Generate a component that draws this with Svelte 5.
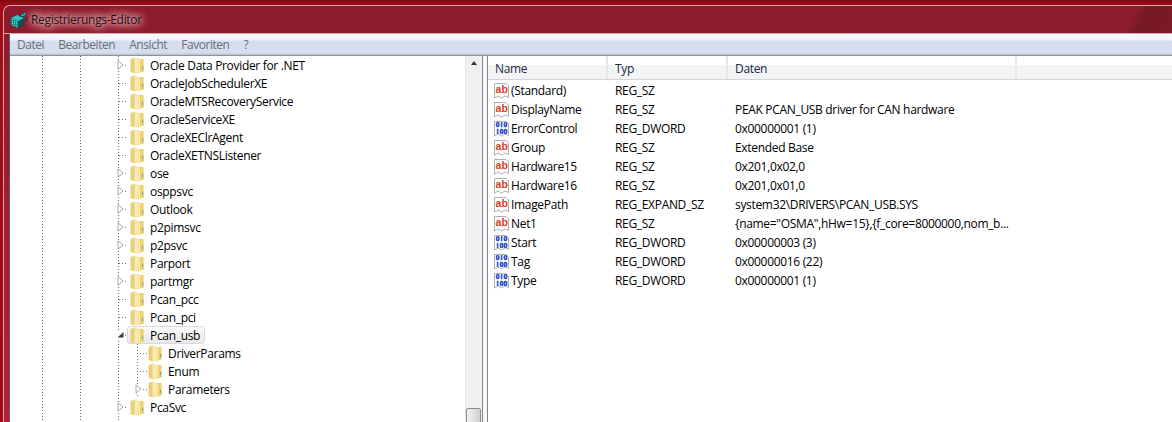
<script>
  const treeRows = [
    { label: 'Oracle Data Provider for .NET', arrow: 'open' },
    { label: 'OracleJobSchedulerXE' },
    { label: 'OracleMTSRecoveryService' },
    { label: 'OracleServiceXE' },
    { label: 'OracleXEClrAgent' },
    { label: 'OracleXETNSListener' },
    { label: 'ose', arrow: 'open' },
    { label: 'osppsvc', arrow: 'open' },
    { label: 'Outlook', arrow: 'open' },
    { label: 'p2pimsvc', arrow: 'open' },
    { label: 'p2psvc', arrow: 'open' },
    { label: 'Parport' },
    { label: 'partmgr', arrow: 'open' },
    { label: 'Pcan_pcc' },
    { label: 'Pcan_pci' },
    { label: 'Pcan_usb', arrow: 'down', selected: true },
    { label: 'DriverParams', child: true },
    { label: 'Enum', child: true },
    { label: 'Parameters', child: true, arrow: 'open' },
    { label: 'PcaSvc', arrow: 'open' }
  ];

  const values = [
    { name: '(Standard)', type: 'REG_SZ', data: '', icon: 'ab' },
    { name: 'DisplayName', type: 'REG_SZ', data: 'PEAK PCAN_USB driver for CAN hardware', icon: 'ab' },
    { name: 'ErrorControl', type: 'REG_DWORD', data: '0x00000001 (1)', icon: 'bin' },
    { name: 'Group', type: 'REG_SZ', data: 'Extended Base', icon: 'ab' },
    { name: 'Hardware15', type: 'REG_SZ', data: '0x201,0x02,0', icon: 'ab' },
    { name: 'Hardware16', type: 'REG_SZ', data: '0x201,0x01,0', icon: 'ab' },
    { name: 'ImagePath', type: 'REG_EXPAND_SZ', data: 'system32\\DRIVERS\\PCAN_USB.SYS', icon: 'ab' },
    { name: 'Net1', type: 'REG_SZ', data: '{name="OSMA",hHw=15},{f_core=8000000,nom_b...', icon: 'ab' },
    { name: 'Start', type: 'REG_DWORD', data: '0x00000003 (3)', icon: 'bin' },
    { name: 'Tag', type: 'REG_DWORD', data: '0x00000016 (22)', icon: 'bin' },
    { name: 'Type', type: 'REG_DWORD', data: '0x00000001 (1)', icon: 'bin' }
  ];

  const menu = ['Datei', 'Bearbeiten', 'Ansicht', 'Favoriten', '?'];
</script>

{#snippet folder()}
  <svg class="folder" width="15" height="17" viewBox="0 0 15 17">
    <path d="M0.5 2 L5 0.5 L5 16.5 L0.5 15 Z" fill="#e8cf7e" />
    <path d="M4.5 0.5 L8 1 L8 16 L4.5 16.5 Z" fill="#f8eab0" />
    <path d="M8 2 L13.5 2 L14 14.5 L8 16 Z" fill="#eed172" />
    <path d="M8.5 2.5 L9.7 2.5 L9.7 15 L8.5 15 Z" fill="#fff6cc" />
    <path d="M12 9 L13 9 L13 12 L12 12 Z" fill="#5f9fd6" />
  </svg>
{/snippet}

{#snippet arrow(kind)}
  <svg class="arrow" width="8" height="10" viewBox="0 0 8 10">
    {#if kind === 'down'}
      <path d="M0.5 7.5 L6.5 7.5 L6.5 2 Z" fill="#3c3c3c" />
    {:else}
      <path d="M1 0.8 L6 5 L1 9.2 Z" fill="#fff" stroke="#a6a6a6" />
    {/if}
  </svg>
{/snippet}

{#snippet valueIcon(kind)}
  <svg class="vicon" width="16" height="17" viewBox="0 0 16 17">
    <path d="M0.5 1.5 H12 L14.5 4 V15.5 L11 14 L7.5 16 L4 14 L0.5 16 Z" fill="#fff" stroke="#b0b0b0" />
    {#if kind === 'ab'}
      <text x="1.6" y="11" class="ab">ab</text>
    {:else}
      <g fill="none" stroke="#2f55c9" stroke-width="1.6">
        <rect x="2.6" y="2.8" width="2.2" height="3.6" rx="0.8" />
        <path d="M7.6 2 V7.2" />
        <rect x="10.4" y="2.8" width="2.2" height="3.6" rx="0.8" />
        <path d="M3.6 8.8 V14" />
        <rect x="6.5" y="9.6" width="2.2" height="3.6" rx="0.8" />
        <rect x="10.4" y="9.6" width="2.2" height="3.6" rx="0.8" />
      </g>
    {/if}
  </svg>
{/snippet}

<div class="window">
  <header class="titlebar">
    <svg class="appicon" width="19" height="18" viewBox="0 0 19 18">
      <defs>
        <pattern id="grid" width="2" height="2" patternUnits="userSpaceOnUse">
          <rect width="2" height="2" fill="#0e8f96" />
          <rect width="1" height="1" fill="#5fe0dc" />
        </pattern>
      </defs>
      <path d="M1 7 L8 10 L8 17 L1 14 Z" fill="url(#grid)" />
      <path d="M8 10 L14 7 L14 14 L8 17 Z" fill="#0b4f55" />
      <path d="M1 7 L7 4 L14 7 L8 10 Z" fill="#2bc4c2" />
      <path d="M10 5 L14 1 L17 3 L13 6 Z" fill="url(#grid)" stroke="#123" stroke-width="0.6" />
      <path d="M15 7 L18 5 L18 9 L15 11 Z" fill="#1c2a30" />
    </svg>
    <span class="title">Registrierungs-Editor</span>
  </header>

  <div class="frame">
    <div class="client">
      <nav class="menubar">
        {#each menu as item}
          <span>{item}</span>
        {/each}
      </nav>

      <div class="panes">
        <section class="tree">
          <div class="tree-rows">
            {#each treeRows as row}
              <div class="row" class:child={row.child}>
                <span class="twist">
                  {#if row.arrow}{@render arrow(row.arrow)}{/if}
                </span>
                <span class="item" class:selected={row.selected}>
                  {@render folder()}
                  <span>{row.label}</span>
                </span>
              </div>
            {/each}
          </div>
          <div class="scrollbar">
            <div class="up"></div>
            <div class="thumb"></div>
          </div>
        </section>

        <section class="list">
          <div class="head">
            <span class="c1">Name</span>
            <span class="c2">Typ</span>
            <span class="c3">Daten</span>
            <span class="rest"></span>
          </div>
          <div class="body">
            {#each values as v}
              <div class="vrow">
                <span class="c1 name">{@render valueIcon(v.icon)}{v.name}</span>
                <span class="c2">{v.type}</span>
                <span class="c3">{v.data}</span>
              </div>
            {/each}
          </div>
        </section>
      </div>
    </div>
  </div>
</div>

<style>
  :global(body) {
    margin: 0;
    overflow: hidden;
  }

  .window {
    width: 1172px;
    height: 422px;
    box-sizing: border-box;
    padding-top: 5px;
    padding-left: 3px;
    background: linear-gradient(#7d0a11 0, #a30c16 5px, #a00b15 100%);
    font-family: "Open Sans", "Liberation Sans", sans-serif;
    font-size: 12px;
    letter-spacing: -0.32px;
    overflow: hidden;
  }

  .titlebar {
    height: 29px;
    box-sizing: border-box;
    display: flex;
    align-items: center;
    gap: 2px;
    padding-left: 6px;
    border-top: 1px solid #d9a6ac;
    border-left: 1px solid #d9a6ac;
    border-bottom: 1px solid #d9a6ac;
    border-top-left-radius: 7px;
    background: linear-gradient(118deg, #8d1b2c 0%, #8c1c2d 96%, #761a25 96.8%, #7a1a26 100%);
  }

  .appicon {
    flex: none;
  }

  .title {
    color: #2a0f12;
    text-shadow: 0 0 6px #eec4c7, 0 0 8px #e8b9bc, 0 0 10px #e0a8ad, 0 0 14px #d89aa0;
  }

  .frame {
    height: 388px;
    box-sizing: border-box;
    border-left: 1px solid #d9a6ac;
    padding-left: 5px;
    background: linear-gradient(#8f1b2e, #b81e38);
    display: flex;
  }

  .client {
    flex: 1;
    min-width: 0;
    border-left: 1px solid #5f5a68;
    background: #fff;
    display: flex;
    flex-direction: column;
  }

  .menubar {
    height: 22px;
    flex: none;
    box-sizing: border-box;
    display: flex;
    align-items: center;
    gap: 14px;
    padding-left: 7px;
    letter-spacing: -0.45px;
    color: #6b6f78;
    border-bottom: 1px solid #8f939b;
    background: linear-gradient(#f6f8fc 0%, #f3f6fb 25%, #d5ddef 35%, #d6ddee 90%, #b9bdc9 100%);
  }

  .panes {
    flex: 1;
    display: flex;
    min-height: 0;
    color: #000;
    background: #f6f7f9;
  }

  .tree {
    width: 473px;
    flex: none;
    display: flex;
    border-right: 1px solid #7e8792;
    box-sizing: border-box;
    background: #fff;
  }

  .tree-rows {
    flex: 1;
    min-width: 0;
    /* dotted guide lines of the ancestor levels */
    background:
      repeating-linear-gradient(#666 0 1px, transparent 1px 3px) 32px 0 / 1px 100% no-repeat,
      repeating-linear-gradient(#666 0 1px, transparent 1px 3px) 70px 0 / 1px 100% no-repeat,
      repeating-linear-gradient(#666 0 1px, transparent 1px 3px) 108px 0 / 1px 100% no-repeat;
  }

  .row {
    height: 18px;
    display: flex;
    align-items: center;
    padding-left: 105px;
    white-space: nowrap;
  }

  .row.child {
    padding-left: 123px;
  }

  .twist {
    width: 15px;
    flex: none;
    display: flex;
    align-items: center;
    height: 100%;
    background: repeating-linear-gradient(90deg, #777 0 1px, transparent 1px 3px) 4px 50% / 8px 1px no-repeat;
  }

  .arrow {
    margin-left: 2px;
    background: #fff;
    flex: none;
  }

  .child .twist {
    background:
      repeating-linear-gradient(90deg, #777 0 1px, transparent 1px 3px) 4px 50% / 11px 1px no-repeat,
      repeating-linear-gradient(#777 0 1px, transparent 1px 3px) 4px 0 / 1px 100% no-repeat;
  }

  .item {
    height: 18px;
    box-sizing: border-box;
    display: flex;
    align-items: center;
    gap: 5px;
    margin-left: -3px;
    padding: 0 4px 0 2px;
    border: 1px solid transparent;
    border-radius: 3px;
  }

  .item.selected {
    border-color: #d9d9d9;
    background: linear-gradient(#fafafa, #e9e9e9);
  }

  .folder {
    flex: none;
  }

  .scrollbar {
    width: 17px;
    flex: none;
    position: relative;
    background: #f0f0f0;
    border-left: 1px solid #e6e6e6;
    box-sizing: border-box;
  }

  .up {
    height: 17px;
  }

  .up::before {
    content: "";
    display: block;
    width: 0;
    margin: 0 auto;
    position: relative;
    top: 5px;
    border: 3px solid transparent;
    border-top: 0;
    border-bottom: 4px solid #333;
  }

  .thumb {
    position: absolute;
    left: 0;
    right: 1px;
    top: 352px;
    height: 40px;
    box-sizing: border-box;
    border: 1px solid #8c8c8c;
    border-radius: 2px;
    background: linear-gradient(90deg, #f2f2f2, #d0d0d0);
  }

  .list {
    flex: 1;
    min-width: 0;
    margin-left: 4px;
    border-left: 1px solid #7e8792;
    background: #fff;
  }

  .head {
    height: 24px;
    box-sizing: border-box;
    display: flex;
    align-items: center;
    border-bottom: 1px solid #d5d5d5;
    background: linear-gradient(#fff 0 40%, #f3f4f6 40% 100%);
    color: #1b2a45;
  }

  .head span {
    height: 100%;
    display: flex;
    align-items: center;
    box-sizing: border-box;
    padding-top: 1px;
    border-right: 2px solid #e8e8e8;
  }

  .head .rest {
    border-right: 0;
    flex: 1;
  }

  .c1,
  .c2 {
    width: 120px;
    flex: none;
    box-sizing: border-box;
    padding-left: 7px;
  }

  .c3 {
    width: 289px;
    flex: none;
    box-sizing: border-box;
    padding-left: 7px;
    white-space: nowrap;
  }

  .body {
    padding-top: 1px;
  }

  .vrow {
    height: 19px;
    display: flex;
    align-items: center;
    white-space: nowrap;
  }

  .name {
    display: flex;
    align-items: center;
    gap: 1px;
    padding-left: 6px;
  }

  .vicon {
    flex: none;
  }

  .ab {
    font-family: "Liberation Sans", sans-serif;
    font-size: 10.5px;
    font-weight: 700;
    letter-spacing: 0;
    fill: #d8401e;
  }
</style>
